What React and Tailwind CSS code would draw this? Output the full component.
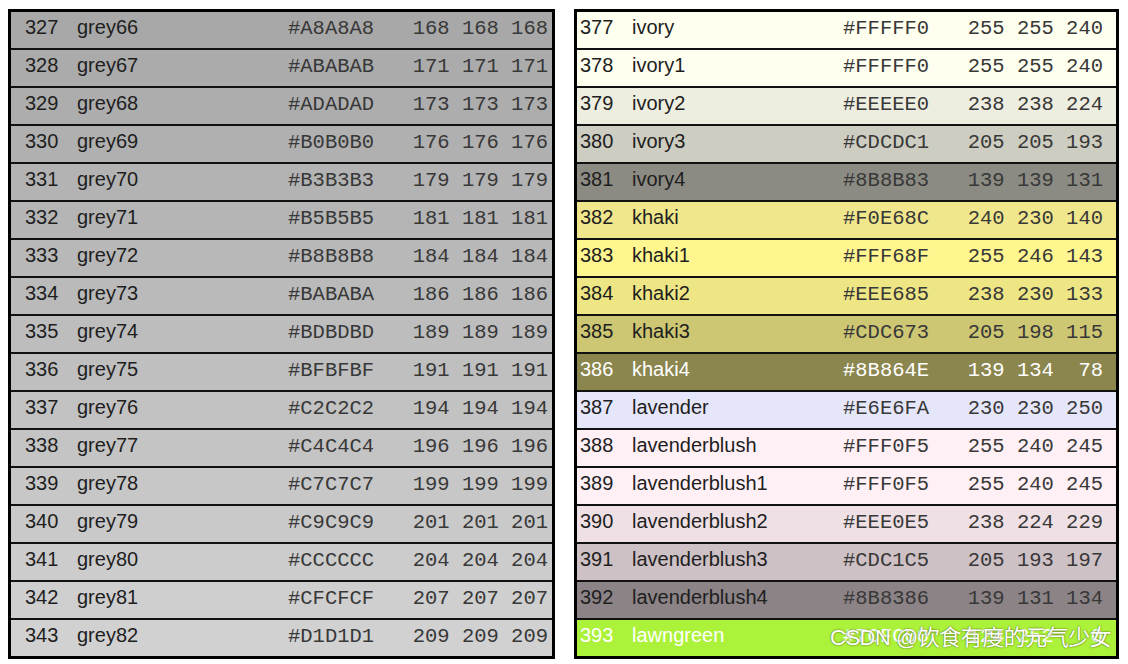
const left = [
  [327, 'grey66', '#A8A8A8', '168 168 168'],
  [328, 'grey67', '#ABABAB', '171 171 171'],
  [329, 'grey68', '#ADADAD', '173 173 173'],
  [330, 'grey69', '#B0B0B0', '176 176 176'],
  [331, 'grey70', '#B3B3B3', '179 179 179'],
  [332, 'grey71', '#B5B5B5', '181 181 181'],
  [333, 'grey72', '#B8B8B8', '184 184 184'],
  [334, 'grey73', '#BABABA', '186 186 186'],
  [335, 'grey74', '#BDBDBD', '189 189 189'],
  [336, 'grey75', '#BFBFBF', '191 191 191'],
  [337, 'grey76', '#C2C2C2', '194 194 194'],
  [338, 'grey77', '#C4C4C4', '196 196 196'],
  [339, 'grey78', '#C7C7C7', '199 199 199'],
  [340, 'grey79', '#C9C9C9', '201 201 201'],
  [341, 'grey80', '#CCCCCC', '204 204 204'],
  [342, 'grey81', '#CFCFCF', '207 207 207'],
  [343, 'grey82', '#D1D1D1', '209 209 209'],
]

const right = [
  [377, 'ivory', '#FFFFF0', '255 255 240'],
  [378, 'ivory1', '#FFFFF0', '255 255 240'],
  [379, 'ivory2', '#EEEEE0', '238 238 224'],
  [380, 'ivory3', '#CDCDC1', '205 205 193'],
  [381, 'ivory4', '#8B8B83', '139 139 131'],
  [382, 'khaki', '#F0E68C', '240 230 140'],
  [383, 'khaki1', '#FFF68F', '255 246 143'],
  [384, 'khaki2', '#EEE685', '238 230 133'],
  [385, 'khaki3', '#CDC673', '205 198 115'],
  [386, 'khaki4', '#8B864E', '139 134  78', true],
  [387, 'lavender', '#E6E6FA', '230 230 250'],
  [388, 'lavenderblush', '#FFF0F5', '255 240 245'],
  [389, 'lavenderblush1', '#FFF0F5', '255 240 245'],
  [390, 'lavenderblush2', '#EEE0E5', '238 224 229'],
  [391, 'lavenderblush3', '#CDC1C5', '205 193 197'],
  [392, 'lavenderblush4', '#8B8386', '139 131 134'],
  [393, 'lawngreen', '#7CFC00', '124 252   0', true, '#adf23a'],
]

function ColorTable({ rows, pad }) {
  return (
    <div className="border-[3px] border-black flex flex-col">
      {rows.map(([n, name, hex, rgb, light, shown], i) => {
        const last = i === rows.length - 1
        return (
          <div
            key={n}
            className={`flex items-center pb-[3px] ${pad} ${last ? 'h-[36px]' : 'h-[38px] border-b-2 border-[#111]'} ${light ? 'text-white' : 'text-[#1e1e1e]'}`}
            style={{ backgroundColor: shown || hex }}
          >
            <span className="w-[52px] leading-none pb-[4px] text-[20px] font-['Liberation_Sans',Arial,sans-serif]">{n}</span>
            <span className="w-[211px] leading-none pb-[4px] text-[20px] font-['Liberation_Sans',Arial,sans-serif]">{name}</span>
            <span className={`w-[120px] leading-none pt-[2px] text-[20.5px] font-['Liberation_Mono','Courier_New',monospace] ${light ? '' : 'text-[#383838]'}`}>{hex}</span>
            <span className={`w-[140px] leading-none pt-[2px] text-right whitespace-pre text-[20.5px] font-['Liberation_Mono','Courier_New',monospace] ${light ? '' : 'text-[#383838]'}`}>{rgb}</span>
          </div>
        )
      })}
    </div>
  )
}

export default function App() {
  return (
    <div className="w-[1128px] h-[664px] bg-white relative overflow-hidden">
      <div className="flex gap-[19px] pt-[9px] pl-[8px]">
        <div className="w-[547px]">
          <ColorTable rows={left} pad="pl-[14px]" />
        </div>
        <div className="w-[545px]">
          <ColorTable rows={right} pad="pl-[3px]" />
        </div>
      </div>
      <div className="absolute left-[830px] top-[621px] text-white text-[22px] tracking-[-0.5px] font-['Liberation_Sans','Noto_Sans_CJK_SC',sans-serif] [text-shadow:0_0_2px_rgba(0,0,0,0.7)]">
        CSDN @饮食有度的元气少女
      </div>
    </div>
  )
}
